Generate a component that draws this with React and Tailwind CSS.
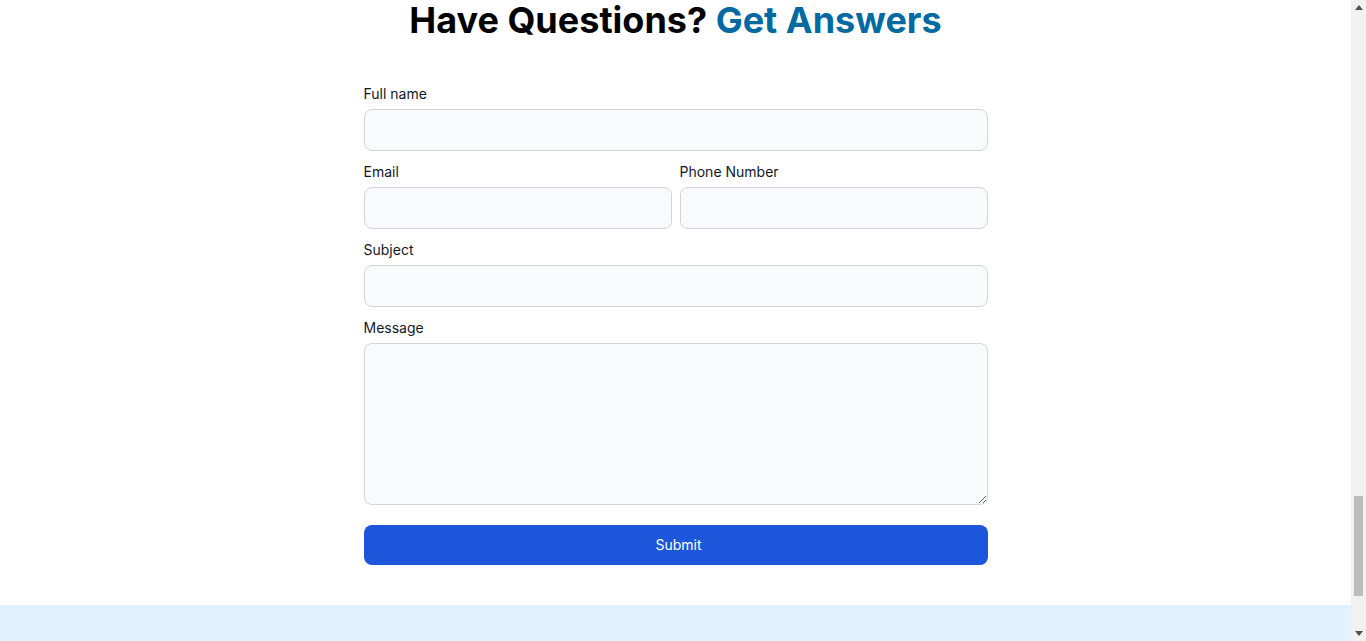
import React from "react";

function Field({ label, className = "" }) {
  return (
    <div className={className}>
      <label className="block text-sm leading-5 text-[#111827] mb-[5px]">{label}</label>
      <input
        type="text"
        className="block w-full h-[42px] rounded-lg border border-[#d1d5db] bg-[#f9fafb] px-2.5 text-sm text-[#111827] outline-none"
      />
    </div>
  );
}

function Scrollbar() {
  return (
    <div aria-hidden="true" className="w-[15px] h-[641px] shrink-0 bg-[#f1f1f1] flex flex-col items-center">
      <div className="h-[15px] w-full flex items-center justify-center">
        <svg width="8" height="5" viewBox="0 0 8 5"><path d="M4 0 L8 5 L0 5 Z" fill="#505050" /></svg>
      </div>
      <div className="h-[481px]" />
      <div className="h-[100px] w-[9px] bg-[#bcbcbc]" />
      <div className="flex-1" />
      <div className="h-[15px] w-full flex items-center justify-center">
        <svg width="8" height="5" viewBox="0 0 8 5"><path d="M0 0 L8 0 L4 5 Z" fill="#505050" /></svg>
      </div>
    </div>
  );
}

export default function App() {
  return (
    <div
      className="flex h-[641px] overflow-hidden bg-white"
      style={{ fontFamily: "Inter, 'Noto Sans', sans-serif" }}
    >
      <main className="flex-1 min-w-0 h-[641px] overflow-hidden">
        <section className="pb-10">
          <h2 className="text-center text-4xl leading-10 font-bold text-black">
            Have Questions? <span className="text-[#0369a1]">Get Answers</span>
          </h2>
          <form className="w-[624px] mx-auto mt-[44px] flex flex-col gap-[11px]">
            <Field label="Full name" />
            <div className="grid grid-cols-2 gap-2">
              <Field label="Email" />
              <Field label="Phone Number" />
            </div>
            <Field label="Subject" />
            <div>
              <label className="block text-sm leading-5 text-[#111827] mb-[5px]">Message</label>
              <textarea className="block w-full h-[162px] rounded-lg border border-[#d1d5db] bg-[#f9fafb] p-2.5 text-sm outline-none" />
            </div>
            <button
              type="button"
              className="mt-[9px] h-10 w-full rounded-lg bg-[#1c56db] pl-1.5 text-white text-sm"
            >
              Submit
            </button>
          </form>
        </section>
        <footer className="h-[228px] bg-[#e0f2fe]" />
      </main>
      <Scrollbar />
    </div>
  );
}
